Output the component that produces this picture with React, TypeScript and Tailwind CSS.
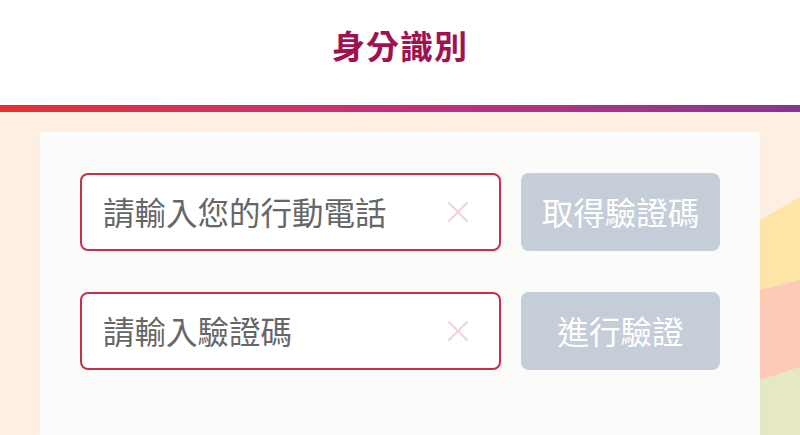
const font = { fontFamily: '"Noto Sans CJK TC", "Noto Sans", sans-serif' };

function ClearIcon() {
  return (
    <svg width="22" height="22" viewBox="0 0 22 22" className="shrink-0">
      <path d="M2 2 L20 20 M20 2 L2 20" stroke="#f1d2da" strokeWidth="2" strokeLinecap="round" />
    </svg>
  );
}

function CodeRow({ placeholder, action }: { placeholder: string; action: string }) {
  return (
    <div className="flex gap-5">
      <div className="flex h-[78px] w-[421px] items-center justify-between rounded-lg border-2 border-[#c4314b] bg-white pl-[21px] pr-[30px]">
        <span className="text-[31.5px] leading-none text-[#666]">{placeholder}</span>
        <ClearIcon />
      </div>
      <button className="flex h-[78px] w-[199px] items-center justify-center rounded-lg bg-[#c5cdd8] text-[31.5px] leading-none text-white">
        {action}
      </button>
    </div>
  );
}

export default function App() {
  return (
    <div className="flex h-[435px] w-[800px] flex-col overflow-hidden bg-white" style={font}>
      <header className="flex h-[105px] shrink-0 items-center justify-center pb-[14px]">
        <h1 className="text-[33px] font-bold tracking-[1px] text-[#a0124f]">身分識別</h1>
      </header>
      <div className="h-[7px] shrink-0 bg-gradient-to-r from-[#e4312f] via-[#c2307a] to-[#8a3392]" />

      <main className="relative flex-1 bg-[#fdf0e2] px-10 pt-5">
        <svg className="absolute inset-0 h-full w-full" viewBox="0 0 800 323" preserveAspectRatio="none">
          <polygon points="700,142 800,85 800,323 700,323" fill="#fde5a8" />
          <polygon points="700,193 800,168 800,323 700,323" fill="#fdcab6" />
          <polygon points="700,287 800,255 800,323 700,323" fill="#e6e8c2" />
        </svg>
        <div className="relative flex h-full flex-col gap-[41px] bg-[#fbfbfa] pl-10 pt-[41px] shadow-[0_0_4px_rgba(0,0,0,0.03)]">
          <CodeRow placeholder="請輸入您的行動電話" action="取得驗證碼" />
          <CodeRow placeholder="請輸入驗證碼" action="進行驗證" />
        </div>
      </main>
    </div>
  );
}
